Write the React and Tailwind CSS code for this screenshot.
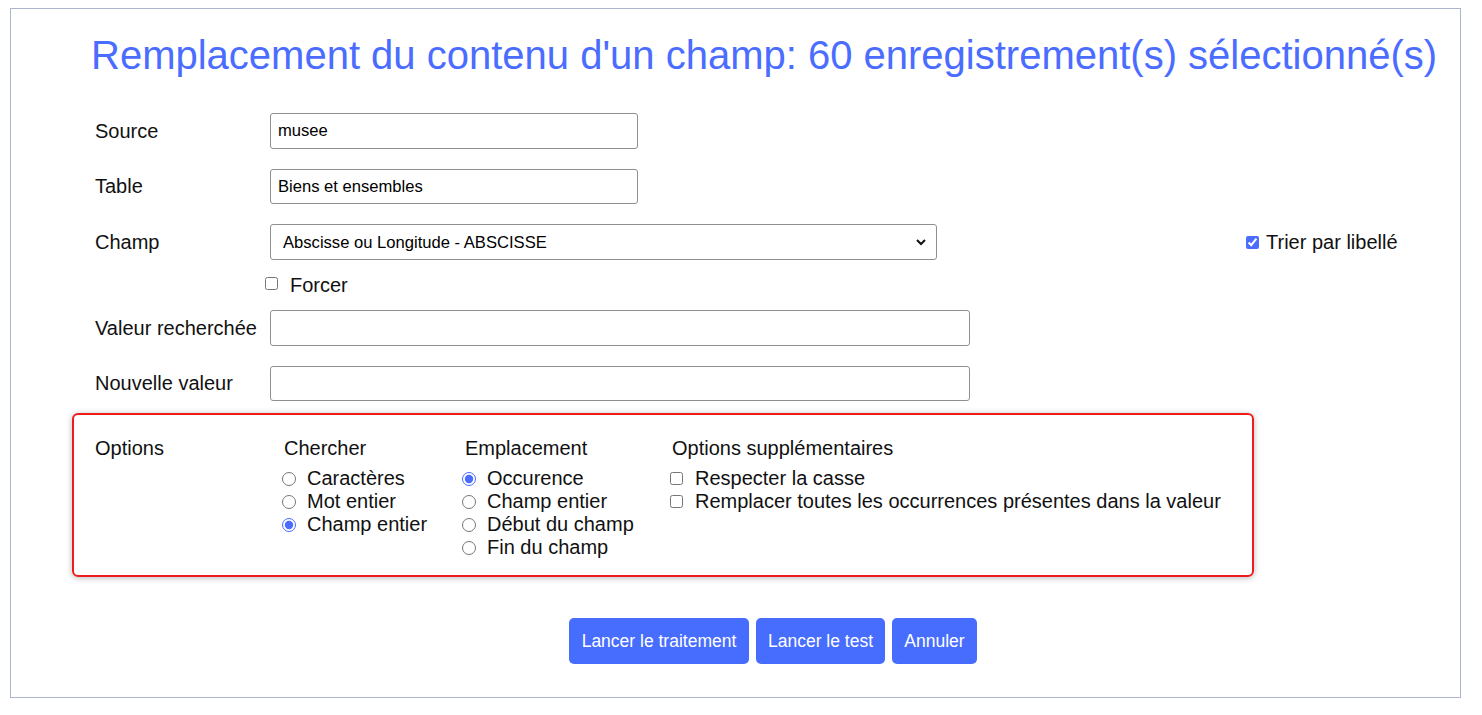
import { useState } from 'react';

const font = { fontFamily: '"Liberation Sans", Arial, sans-serif' };

const Radio = ({ name, label, checked, onChange }) => (
  <label className="flex items-center h-[23px]">
    <input
      type="radio"
      name={name}
      checked={checked}
      onChange={onChange}
      className="m-0 w-[14px] h-[14px] accent-[#4a6cff]"
    />
    <span className="ml-[11px]">{label}</span>
  </label>
);

const Check = ({ label, checked, onChange }) => (
  <label className="flex items-center h-[23px]">
    <input
      type="checkbox"
      checked={checked}
      onChange={onChange}
      className="m-0 w-[13px] h-[13px] accent-[#4a6cff]"
    />
    <span className="ml-[12px]">{label}</span>
  </label>
);

const App = () => {
  const [chercher, setChercher] = useState('champ');
  const [emplacement, setEmplacement] = useState('occurence');
  const [trier, setTrier] = useState(true);
  const [forcer, setForcer] = useState(false);
  const [casse, setCasse] = useState(false);
  const [toutes, setToutes] = useState(false);

  const inputCls =
    'border border-[#8f8f8f] rounded-[3px] px-[7px] text-[16.6px] text-black bg-white outline-none';
  const btnCls = 'h-[46px] rounded-[5px] bg-[#476dff] text-white text-[17.5px] whitespace-nowrap';

  return (
    <div className="bg-white w-[1482px] h-[715px] pt-[8px] pl-[10px]" style={font}>
      <div className="w-[1451px] h-[690px] border border-[#a9b6cc] text-[20px] leading-[23px] text-[#111]">
        <h1 className="pl-[80px] pt-[23px] text-[40px] leading-[46px] text-[#4a6cff] whitespace-nowrap">
          Remplacement du contenu d'un champ: 60 enregistrement(s) sélectionné(s)
        </h1>

        <div className="pl-[84px] pt-[35px]">
          <div className="flex items-center">
            <span className="w-[175px]">Source</span>
            <input className={`${inputCls} w-[368px] h-[36px]`} defaultValue="musee" />
          </div>

          <div className="flex items-center mt-[20px]">
            <span className="w-[175px]">Table</span>
            <input className={`${inputCls} w-[368px] h-[35px]`} defaultValue="Biens et ensembles" />
          </div>

          <div className="flex items-center mt-[20px]">
            <span className="w-[175px]">Champ</span>
            <div className="relative">
              <select className={`${inputCls} w-[667px] h-[36px] appearance-none pl-[12px] text-[16.4px]`} defaultValue="abs">
                <option value="abs">Abscisse ou Longitude - ABSCISSE</option>
              </select>
              <svg
                className="absolute right-[10px] top-[13px] pointer-events-none"
                width="12"
                height="10"
                viewBox="0 0 12 10"
              >
                <path d="M2 3l4 4 4-4" fill="none" stroke="#111" strokeWidth="2" />
              </svg>
            </div>
            <label className="flex items-center ml-[309px] whitespace-nowrap">
              <input
                type="checkbox"
                checked={trier}
                onChange={() => setTrier(!trier)}
                className="m-0 w-[13px] h-[13px] accent-[#4a6cff]"
              />
              <span className="ml-[7px]">Trier par libellé</span>
            </label>
          </div>

          <div className="flex items-center h-[50px] pl-[170px]">
            <label className="flex items-center">
              <input
                type="checkbox"
                checked={forcer}
                onChange={() => setForcer(!forcer)}
                className="m-0 w-[13px] h-[13px] -mt-[4px]"
              />
              <span className="ml-[12px]">Forcer</span>
            </label>
          </div>

          <div className="flex items-center">
            <span className="w-[175px]">Valeur recherchée</span>
            <input className={`${inputCls} w-[700px] h-[36px]`} />
          </div>

          <div className="flex items-center mt-[20px]">
            <span className="w-[175px]">Nouvelle valeur</span>
            <input className={`${inputCls} w-[700px] h-[35px]`} />
          </div>
        </div>

        <div className="ml-[61px] mt-[12px] w-[1182px] h-[164px] border-2 border-[#ee1c1c] rounded-[6px] shadow-[0_1px_6px_rgba(0,0,0,0.28)] flex pt-[22px] pl-[21px]">
          <div className="w-[187px]">Options</div>

          <div className="w-[180px]">
            <div className="pl-[2px] mb-[7px]">Chercher</div>
            <Radio name="chercher" label="Caractères" checked={chercher === 'car'} onChange={() => setChercher('car')} />
            <Radio name="chercher" label="Mot entier" checked={chercher === 'mot'} onChange={() => setChercher('mot')} />
            <Radio name="chercher" label="Champ entier" checked={chercher === 'champ'} onChange={() => setChercher('champ')} />
          </div>

          <div className="w-[208px]">
            <div className="pl-[3px] mb-[7px]">Emplacement</div>
            <Radio name="empl" label="Occurence" checked={emplacement === 'occurence'} onChange={() => setEmplacement('occurence')} />
            <Radio name="empl" label="Champ entier" checked={emplacement === 'champ'} onChange={() => setEmplacement('champ')} />
            <Radio name="empl" label="Début du champ" checked={emplacement === 'debut'} onChange={() => setEmplacement('debut')} />
            <Radio name="empl" label="Fin du champ" checked={emplacement === 'fin'} onChange={() => setEmplacement('fin')} />
          </div>

          <div>
            <div className="pl-[2px] mb-[7px]">Options supplémentaires</div>
            <Check label="Respecter la casse" checked={casse} onChange={() => setCasse(!casse)} />
            <Check
              label="Remplacer toutes les occurrences présentes dans la valeur"
              checked={toutes}
              onChange={() => setToutes(!toutes)}
            />
          </div>
        </div>

        <div className="flex gap-[7px] pl-[558px] mt-[41px]">
          <button className={`${btnCls} w-[180px]`}>Lancer le traitement</button>
          <button className={`${btnCls} w-[129px]`}>Lancer le test</button>
          <button className={`${btnCls} w-[85px]`}>Annuler</button>
        </div>
      </div>
    </div>
  );
};

export default App;
